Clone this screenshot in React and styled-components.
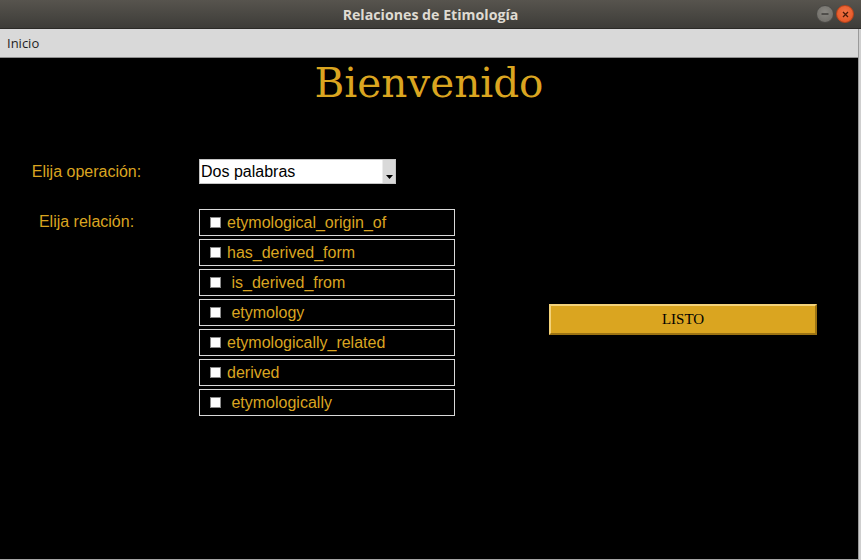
import React from "react";
import styled, { createGlobalStyle } from "styled-components";

const Global = createGlobalStyle`
  html, body { margin: 0; padding: 0; background: #000; }
  body { width: 861px; height: 560px; overflow: hidden; }
  * { box-sizing: border-box; }
`;

const Win = styled.div`
  width: 861px;
  height: 560px;
  display: flex;
  flex-direction: column;
  overflow: hidden;
`;

const TitleBar = styled.div`
  height: 29px;
  flex: none;
  display: grid;
  grid-template-columns: 1fr auto 1fr;
  align-items: center;
  background: linear-gradient(#57544e, #3d3c38);
  border-bottom: 1px solid #2b2a27;
`;

const Title = styled.div`
  grid-column: 2;
  font-family: "Open Sans", "DejaVu Sans", sans-serif;
  font-weight: 700;
  font-size: 14.2px;
  color: #dfdbd2;
`;

const Controls = styled.div`
  grid-column: 3;
  justify-self: end;
  display: flex;
  gap: 2px;
  padding-right: 7px;
`;

const CircleBtn = styled.div`
  width: 18px;
  height: 18px;
  border-radius: 50%;
  display: flex;
  align-items: center;
  justify-content: center;
  background: ${(p) =>
    p.$close
      ? "radial-gradient(circle at 50% 40%, #f27446, #e2501e)"
      : "radial-gradient(circle at 50% 40%, #8a8882, #6a6863)"};
  border: 1px solid ${(p) => (p.$close ? "#b8421a" : "#4a4945")};
`;

const Body = styled.div`
  flex: 1;
  display: flex;
  min-height: 0;
`;

const Main = styled.div`
  flex: 1;
  display: flex;
  flex-direction: column;
  background: #000;
  border-bottom: 1px solid #a8a8a8;
`;

const RightEdge = styled.div`
  width: 3px;
  flex: none;
  background: #cfcfcf;
  border-left: 1px solid #9a9a9a;
`;

const MenuBar = styled.div`
  height: 29px;
  flex: none;
  background: #d9d9d9;
  border-bottom: 1px solid #8f8f8f;
  display: flex;
  align-items: center;
  padding-left: 7px;
`;

const MenuItem = styled.span`
  font-family: "Open Sans", "DejaVu Sans", sans-serif;
  font-size: 13px;
  color: #1e1e1e;
`;

const Content = styled.div`
  flex: 1;
  display: flex;
  flex-direction: column;
`;

const Heading = styled.h1`
  margin: 2px 0 0;
  font-family: "DejaVu Serif", serif;
  font-weight: 400;
  font-size: 40.5px;
  line-height: 47px;
  color: #daa520;
  text-align: center;
`;

const Row = styled.div`
  display: flex;
  align-items: ${(p) => p.$align || "center"};
  margin-top: ${(p) => p.$top}px;
`;

const Label = styled.div`
  width: 173px;
  margin-right: 26px;
  text-align: center;
  font-family: "Liberation Sans", Arial, sans-serif;
  font-size: 16px;
  line-height: ${(p) => p.$lh || 20}px;
  color: #daa520;
`;

const Combo = styled.div`
  width: 197px;
  height: 25px;
  display: flex;
  background: #fff;
  border: 1px solid #c4c4c4;
`;

const ComboText = styled.div`
  flex: 1;
  padding-left: 1px;
  font-family: "Liberation Sans", Arial, sans-serif;
  font-size: 16px;
  line-height: 23px;
  color: #000;
`;

const ComboArrow = styled.div`
  width: 13px;
  background: #d9d9d9;
  border-left: 1px solid #ececec;
  display: flex;
  align-items: flex-end;
  justify-content: center;
  padding-bottom: 4px;
`;

const List = styled.div`
  display: flex;
  flex-direction: column;
  gap: 3px;
`;

const Option = styled.label`
  width: 256px;
  height: 27px;
  border: 1px solid #d9d9d9;
  display: flex;
  align-items: center;
  padding-left: 10px;
  gap: 6px;
  font-family: "Liberation Sans", Arial, sans-serif;
  font-size: 16px;
  color: #daa520;
  white-space: pre;
`;

const Box = styled.span`
  width: 11px;
  height: 11px;
  flex: none;
  background: #fff;
  border: 1px solid #8a8a8a;
`;

const Listo = styled.button`
  margin-left: 94px;
  margin-top: 95px;
  width: 268px;
  height: 31px;
  padding: 0;
  background: #daa520;
  border: 2px solid;
  border-color: #f3d27a #9c7313 #9c7313 #f3d27a;
  font-family: "Liberation Serif", "Times New Roman", serif;
  font-size: 15px;
  color: #000;
`;

const options = [
  "etymological_origin_of",
  "has_derived_form",
  " is_derived_from",
  " etymology",
  "etymologically_related",
  "derived",
  " etymologically",
];

export default function App() {
  return (
    <>
      <Global />
      <Win>
        <TitleBar>
          <Title>Relaciones de Etimología</Title>
          <Controls>
            <CircleBtn>
              <svg width="8" height="8" viewBox="0 0 8 8">
                <line x1="0.5" y1="4" x2="7.5" y2="4" stroke="#3a3935" strokeWidth="1.4" />
              </svg>
            </CircleBtn>
            <CircleBtn $close>
              <svg width="7" height="7" viewBox="0 0 7 7">
                <path d="M1 1L6 6M6 1L1 6" stroke="#4a1a08" strokeWidth="1.3" />
              </svg>
            </CircleBtn>
          </Controls>
        </TitleBar>
        <Body>
          <Main>
            <MenuBar>
              <MenuItem>Inicio</MenuItem>
            </MenuBar>
            <Content>
              <Heading>Bienvenido</Heading>
              <Row $top={52}>
                <Label>Elija operación:</Label>
                <Combo>
                  <ComboText>Dos palabras</ComboText>
                  <ComboArrow>
                    <svg width="7" height="4" viewBox="0 0 7 4">
                      <path d="M0 0H7L3.5 4Z" fill="#000" />
                    </svg>
                  </ComboArrow>
                </Combo>
              </Row>
              <Row $top={25} $align="flex-start">
                <Label $lh={25}>Elija relación:</Label>
                <List>
                  {options.map((o) => (
                    <Option key={o}>
                      <Box />
                      {o}
                    </Option>
                  ))}
                </List>
                <Listo>LISTO</Listo>
              </Row>
            </Content>
          </Main>
          <RightEdge />
        </Body>
      </Win>
    </>
  );
}
